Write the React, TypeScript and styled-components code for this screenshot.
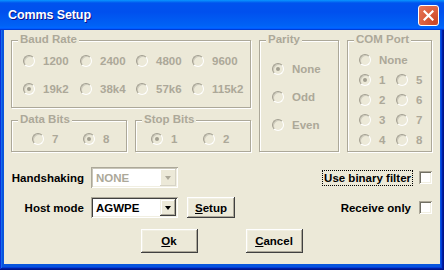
import React from 'react'
import styled, {createGlobalStyle} from 'styled-components'

const GlobalStyle = createGlobalStyle`
  html, body {
    margin: 0;
    padding: 0;
    background: #ece9d8;
  }
  body {
    font-family: "Liberation Sans", Arial, sans-serif;
  }
`

const Window = styled.div`
  width: 444px;
  height: 270px;
  display: flex;
  flex-direction: column;
  background: #0855dd;
  box-shadow: inset -1px -1px #00138c, inset 1px 0 #0831d9, inset -2px -2px #001ea0,
    inset 2px 0 #166aee, inset -3px -3px #003bda, inset 3px 0 #0855dd;
  overflow: hidden;
`

const TitleBar = styled.div`
  height: 30px;
  flex: none;
  display: flex;
  align-items: center;
  justify-content: space-between;
  padding: 0 5px 0 8px;
  background: linear-gradient(
    180deg,
    #0997ff 0%,
    #0053ee 10%,
    #0050ee 40%,
    #0062f5 85%,
    #0066ff 92%,
    #005bff 95%,
    #003dd7 97%,
    #003dd7 100%
  );
`

const Title = styled.span`
  color: #fff;
  font-weight: bold;
  font-size: 12.5px;
  letter-spacing: -0.1px;
  text-shadow: 1px 1px #0f1089;
`

const CloseButton = styled.div`
  width: 21px;
  height: 21px;
  box-sizing: border-box;
  border: 1px solid #fff;
  border-radius: 3px;
  background: radial-gradient(circle at 85% 85%, #cc4625 0%, #dc6141 55%, #e87656 100%);
  display: flex;
  align-items: center;
  justify-content: center;
`

const Body = styled.div`
  flex: 1;
  margin: 0 4px 6px;
  background: #ece9d8;
  padding: 10px 8px 0 7px;
  display: flex;
  flex-direction: column;
  font-size: 11.5px;
  font-weight: bold;
  color: #000;
`

const TopRow = styled.div`
  display: flex;
  gap: 8px;
  align-items: stretch;
`

const LeftColumn = styled.div`
  width: 240px;
  display: flex;
  flex-direction: column;
`

const Group = styled.div<{$width?: number}>`
  position: relative;
  box-sizing: border-box;
  ${(p) => (p.$width ? `width: ${p.$width}px;` : '')}
  border: 1px solid #aca899;
  box-shadow: 1px 1px 0 #fff, inset 1px 1px 0 #fff;
`

const Legend = styled.span`
  position: absolute;
  top: -8px;
  left: 6px;
  padding: 0 2px;
  line-height: 13px;
  background: #ece9d8;
  color: #aca899;
`

const BaudGrid = styled.div`
  display: grid;
  grid-template-columns: 57px 56px 56px auto;
  grid-auto-rows: 20px;
  row-gap: 8px;
  padding: 10px 0 8px 11px;
`

const PairRow = styled.div`
  display: flex;
  gap: 8px;
  margin-top: 12px;
  flex: 1;
`

const PairGrid = styled.div<{$left: number; $col: number}>`
  display: grid;
  grid-template-columns: ${(p) => p.$col}px auto;
  grid-auto-rows: 20px;
  padding: 8px 0 2px ${(p) => p.$left}px;
`

const ParityList = styled.div`
  display: flex;
  flex-direction: column;
  gap: 8px;
  padding: 18px 0 0 12px;
`

const ComList = styled.div`
  display: grid;
  grid-template-columns: 37px auto;
  grid-auto-rows: 20px;
  padding: 9px 0 0 11px;
`

const ComNone = styled.div`
  grid-column: 1 / span 2;
`

const RadioItem = styled.label`
  display: flex;
  align-items: center;
  gap: 8px;
  height: 20px;
  color: #aca899;
  white-space: nowrap;
`

const RadioCircle = styled.span<{$checked?: boolean}>`
  position: relative;
  flex: none;
  width: 12px;
  height: 12px;
  box-sizing: border-box;
  border-radius: 50%;
  border: 1px solid;
  border-color: #a29f91 #fff #fff #a29f91;
  box-shadow: inset 1px 1px 0 #cdcabc;
  &::after {
    content: '';
    display: ${(p) => (p.$checked ? 'block' : 'none')};
    position: absolute;
    left: 3px;
    top: 3px;
    width: 4px;
    height: 4px;
    border-radius: 50%;
    background: #a29f91;
  }
`

const BottomSection = styled.div`
  margin-top: 15px;
  display: flex;
  flex-direction: column;
`

const FormRow = styled.div<{$gap?: number}>`
  display: flex;
  justify-content: space-between;
  align-items: center;
  height: 21px;
  margin-top: ${(p) => p.$gap ?? 0}px;
`

const FieldGroup = styled.div`
  display: flex;
  align-items: center;
`

const FieldLabel = styled.span`
  width: 73px;
  margin-right: 7px;
  text-align: right;
  white-space: nowrap;
`

const Combo = styled.div<{$disabled?: boolean}>`
  position: relative;
  width: 87px;
  height: 21px;
  box-sizing: border-box;
  display: flex;
  align-items: center;
  justify-content: space-between;
  padding: 2px 2px 2px 5px;
  background: #fff;
  color: ${(p) => (p.$disabled ? '#aca899' : '#000')};
  box-shadow: ${(p) =>
    p.$disabled
      ? 'inset 1px 1px #aca899, inset -1px -1px #fff, inset 2px 2px #c9c6b8, inset -2px -2px #f1efe2'
      : 'inset 1px 1px #aca899, inset -1px -1px #fff, inset 2px 2px #404040, inset -2px -2px #f1efe2'};
`

const ComboArrow = styled.span<{$disabled?: boolean}>`
  width: 16px;
  height: 17px;
  box-sizing: border-box;
  display: flex;
  align-items: center;
  justify-content: center;
  background: #ece9d8;
  box-shadow: ${(p) =>
    p.$disabled
      ? 'inset -1px -1px #d6d3c6, inset 1px 1px #fff'
      : 'inset -1px -1px #404040, inset 1px 1px #f1efe2, inset -2px -2px #aca899, inset 2px 2px #fff'};
  &::after {
    content: '';
    border-left: 3.5px solid transparent;
    border-right: 3.5px solid transparent;
    border-top: 4px solid ${(p) => (p.$disabled ? '#aca899' : '#000')};
  }
`

const Button = styled.button<{$w: number; $h: number}>`
  width: ${(p) => p.$w}px;
  height: ${(p) => p.$h}px;
  padding: 0;
  border: none;
  background: #ece9d8;
  font: inherit;
  color: #000;
  box-shadow: inset -1px -1px #404040, inset 1px 1px #fff, inset -2px -2px #aca899,
    inset 2px 2px #f1efe2;
`

const SetupButton = styled(Button)`
  margin-left: 9px;
`

const ButtonRow = styled.div`
  margin-top: 11px;
  display: flex;
  justify-content: center;
  gap: 48px;
`

const CheckGroup = styled.div`
  display: flex;
  align-items: center;
  gap: 7px;
`

const FocusText = styled.span<{$focused?: boolean}>`
  padding: 1px 1px 1px 1px;
  outline: ${(p) => (p.$focused ? '1px dotted #000' : 'none')};
  white-space: nowrap;
`

const CheckBox = styled.span`
  width: 13px;
  height: 13px;
  box-sizing: border-box;
  background: #fff;
  box-shadow: inset 1px 1px #aca899, inset -1px -1px #fff, inset 2px 2px #716f64,
    inset -2px -2px #f1efe2;
`

const Radio: React.FC<{label: string; checked?: boolean}> = ({label, checked}) => (
  <RadioItem>
    <RadioCircle $checked={checked} />
    {label}
  </RadioItem>
)

const App: React.FC = () => {
  const baud = ['1200', '2400', '4800', '9600', '19k2', '38k4', '57k6', '115k2']

  return (
    <>
      <GlobalStyle />
      <Window>
        <TitleBar>
          <Title>Comms Setup</Title>
          <CloseButton>
            <svg width="11" height="11" viewBox="0 0 11 11">
              <path d="M1.5 1.5 L9.5 9.5 M9.5 1.5 L1.5 9.5" stroke="#fff" strokeWidth="2.2" strokeLinecap="square" />
            </svg>
          </CloseButton>
        </TitleBar>

        <Body>
          <TopRow>
            <LeftColumn>
              <Group>
                <Legend>Baud Rate</Legend>
                <BaudGrid>
                  {baud.map((b) => (
                    <Radio key={b} label={b} checked={b === '19k2'} />
                  ))}
                </BaudGrid>
              </Group>

              <PairRow>
                <Group $width={116}>
                  <Legend>Data Bits</Legend>
                  <PairGrid $left={20} $col={51}>
                    <Radio label="7" />
                    <Radio label="8" checked />
                  </PairGrid>
                </Group>
                <Group $width={116}>
                  <Legend>Stop Bits</Legend>
                  <PairGrid $left={15} $col={52}>
                    <Radio label="1" checked />
                    <Radio label="2" />
                  </PairGrid>
                </Group>
              </PairRow>
            </LeftColumn>

            <Group $width={80}>
              <Legend>Parity</Legend>
              <ParityList>
                <Radio label="None" checked />
                <Radio label="Odd" />
                <Radio label="Even" />
              </ParityList>
            </Group>

            <Group $width={85}>
              <Legend>COM Port</Legend>
              <ComList>
                <ComNone>
                  <Radio label="None" />
                </ComNone>
                <Radio label="1" checked />
                <Radio label="5" />
                <Radio label="2" />
                <Radio label="6" />
                <Radio label="3" />
                <Radio label="7" />
                <Radio label="4" />
                <Radio label="8" />
              </ComList>
            </Group>
          </TopRow>

          <BottomSection>
            <FormRow>
              <FieldGroup>
                <FieldLabel>Handshaking</FieldLabel>
                <Combo $disabled>
                  NONE
                  <ComboArrow $disabled />
                </Combo>
              </FieldGroup>
              <CheckGroup>
                <FocusText $focused>Use binary filter</FocusText>
                <CheckBox />
              </CheckGroup>
            </FormRow>

            <FormRow $gap={9}>
              <FieldGroup>
                <FieldLabel>Host mode</FieldLabel>
                <Combo>
                  AGWPE
                  <ComboArrow />
                </Combo>
                <SetupButton $w={48} $h={21}>
                  <u>S</u>etup
                </SetupButton>
              </FieldGroup>
              <CheckGroup>
                <FocusText>Receive only</FocusText>
                <CheckBox />
              </CheckGroup>
            </FormRow>

            <ButtonRow>
              <Button $w={57} $h={24}>
                <u>O</u>k
              </Button>
              <Button $w={57} $h={24}>
                <u>C</u>ancel
              </Button>
            </ButtonRow>
          </BottomSection>
        </Body>
      </Window>
    </>
  )
}

export default App
